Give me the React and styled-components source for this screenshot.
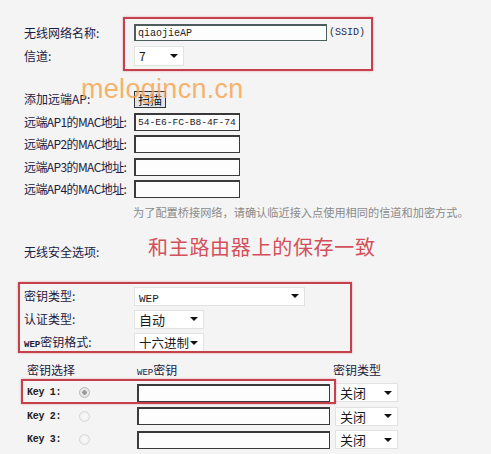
import React from 'react';
import styled, { createGlobalStyle } from 'styled-components';

const GlobalStyle = createGlobalStyle`
    html, body {
        margin: 0;
        padding: 0;
        background: #f4f4f4;
    }
    body {
        font-family: "Noto Sans CJK SC", "Noto Sans", sans-serif;
        color: #1c2040;
    }
`;

const Page = styled.div`
    position: relative;
    width: 491px;
    height: 454px;
    overflow: hidden;
    padding: 21px 0 0 24px;
    box-sizing: border-box;
`;

const Row = styled.div`
    display: flex;
    align-items: center;
    height: ${p => p.h || 23}px;
    margin-top: ${p => p.mt || 0}px;
`;

const Label = styled.div`
    width: 110px;
    flex-shrink: 0;
    font-size: 12px;
    line-height: 1;
    white-space: nowrap;
    letter-spacing: ${p => p.ls || 0}px;
`;

const Ascii = styled.span`
    font-family: "Liberation Mono", monospace;
    font-size: ${p => p.size || 10}px;
    font-weight: ${p => (p.bold ? 700 : 400)};
`;

const KeyName = styled.span`
    font-family: "Liberation Mono", monospace;
    font-size: 10px;
    font-weight: 700;
    letter-spacing: -0.3px;
    color: #222;
`;

const TextInput = styled.div`
    box-sizing: border-box;
    width: ${p => p.w}px;
    height: ${p => p.h || 18}px;
    background: #fdfdfd;
    border: 1px solid ${p => p.border || '#3a3a3a'};
    border-top-width: 2px;
    border-left-width: 2px;
    font-family: "Liberation Mono", monospace;
    font-size: ${p => p.size || 10}px;
    color: #222;
    display: flex;
    align-items: center;
    padding-left: 2px;
    white-space: nowrap;
    overflow: hidden;
`;

const Suffix = styled.span`
    font-family: "Liberation Mono", monospace;
    font-size: 10px;
    margin-left: 2px;
    color: #2a2a50;
`;

const SelectBox = styled.div`
    box-sizing: border-box;
    width: ${p => p.w}px;
    height: ${p => p.h || 20}px;
    background: #fff;
    border: 1px solid #e2e2e2;
    display: flex;
    align-items: center;
    justify-content: space-between;
    padding: 0 5px 0 4px;
    font-size: ${p => p.size || 12}px;
    color: #1a1a1a;
    white-space: nowrap;
`;

const Arrow = styled.span`
    flex-shrink: 0;
    width: 0;
    height: 0;
    border-left: 4px solid transparent;
    border-right: 4px solid transparent;
    border-top: 4px solid #111;
`;

const Select = ({ w, h, size, children }) => (
    <SelectBox w={w} h={h} size={size}>
        <span>{children}</span>
        <Arrow />
    </SelectBox>
);

const ScanButton = styled.div`
    box-sizing: border-box;
    width: 32px;
    height: 17px;
    background: #dfe7ee;
    border: 1px solid #333;
    font-size: 12px;
    display: flex;
    align-items: center;
    justify-content: center;
    color: #111;
`;

const Hint = styled.div`
    margin-left: 109px;
    font-size: 11.2px;
    color: #8a8a8a;
    white-space: nowrap;
`;

const Note = styled.div`
    align-self: flex-start;
    margin-left: 14px;
    font-size: 20px;
    line-height: 24px;
    letter-spacing: 0.7px;
    color: #d3505a;
`;

const KeyTable = styled.div`
    margin-left: 3px;
    margin-top: 3px;
    display: grid;
    grid-template-columns: 52px 58px 198px 63px;
    grid-auto-rows: 23.5px;
    align-items: center;
`;

const HeadCell = styled.div`
    font-size: 12px;
    margin-left: ${p => p.ml || 0}px;
    white-space: nowrap;
`;

const Radio = styled.span`
    display: block;
    box-sizing: border-box;
    width: 11px;
    height: 11px;
    border-radius: 50%;
    border: 1px solid ${p => (p.checked ? '#b8b8b8' : '#d6d6d6')};
    background: radial-gradient(circle, ${p => (p.checked ? '#9a9a9a 0 2px, #e8e8e8 2.5px' : '#fafafa 0, #ececec 100%')});
`;

const Frame = styled.div`
    position: absolute;
    left: ${p => p.x}px;
    top: ${p => p.y}px;
    width: ${p => p.w}px;
    height: ${p => p.h}px;
    border: 2.5px solid #c4404b;
    box-shadow: 0 0 2px rgba(220, 80, 90, 0.5);
    box-sizing: border-box;
    pointer-events: none;
`;

const Watermark = styled.div`
    position: absolute;
    left: 81px;
    top: 74px;
    font-family: "Liberation Sans", Arial, sans-serif;
    font-size: 27px;
    letter-spacing: 0.3px;
    color: rgba(246, 160, 70, 0.8);
    pointer-events: none;
`;

const macs = ['54-E6-FC-B8-4F-74', '', '', ''];

export default function App() {
    return (
        <>
            <GlobalStyle />
            <Page>
                <Row>
                    <Label>无线网络名称:</Label>
                    <TextInput w={193} h={17} border="#4d5c5c">qiaojieAP</TextInput>
                    <Suffix>(SSID)</Suffix>
                </Row>
                <Row>
                    <Label>信道:</Label>
                    <Select w={50}>7</Select>
                </Row>

                <Row mt={20.5}>
                    <Label>添加远端AP:</Label>
                    <ScanButton>扫描</ScanButton>
                </Row>
                {macs.map((m, i) => (
                    <Row key={i} h={22.5}>
                        <Label ls={-0.6}>远端AP{i + 1}的MAC地址:</Label>
                        <TextInput w={106} h={18} size={9.6}>{m}</TextInput>
                    </Row>
                ))}
                <Row h={22.5}>
                    <Hint>为了配置桥接网络，请确认临近接入点使用相同的信道和加密方式。</Hint>
                </Row>

                <Row mt={12} h={34}>
                    <Label>无线安全选项:</Label>
                    <Note>和主路由器上的保存一致</Note>
                </Row>

                <Row mt={15.5}>
                    <Label>密钥类型:</Label>
                    <Select w={171} h={19}><Ascii size={11}>WEP</Ascii></Select>
                </Row>
                <Row h={23.5}>
                    <Label>认证类型:</Label>
                    <Select w={70} h={19} size={13}>自动</Select>
                </Row>
                <Row h={23.5}>
                    <Label><Ascii size={9} bold>WEP</Ascii>密钥格式:</Label>
                    <Select w={70} h={19} size={12.5}>十六进制</Select>
                </Row>

                <KeyTable>
                    <HeadCell>密钥选择</HeadCell>
                    <span />
                    <HeadCell><Ascii size={9}>WEP</Ascii>密钥</HeadCell>
                    <HeadCell ml={-2}>密钥类型</HeadCell>
                    {[1, 2, 3].map(n => (
                        <React.Fragment key={n}>
                            <KeyName>Key {n}:</KeyName>
                            <Radio checked={n === 1} />
                            <TextInput w={193} h={18}></TextInput>
                            <Select w={63} h={19} size={13}>关闭</Select>
                        </React.Fragment>
                    ))}
                </KeyTable>

                <Watermark>melogincn.cn</Watermark>
                <Frame x={123} y={17} w={250} h={54} />
                <Frame x={18} y={282} w={334} h={71} />
                <Frame x={21} y={379} w={315} h={25} />
            </Page>
        </>
    );
}
